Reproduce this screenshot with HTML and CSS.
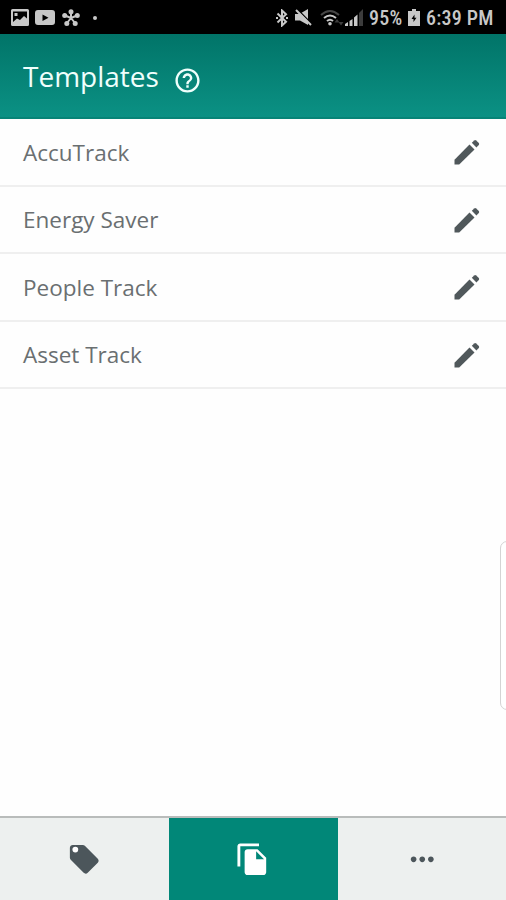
FILE: index.html
```
<!DOCTYPE html>
<html lang="en">
<head>
    <meta charset="UTF-8">
    <meta name="viewport" content="width=device-width, initial-scale=1.0">
    <title>Templates</title>
    <link rel="stylesheet" href="styles.css">
</head>
<body>
    <svg class="sprite" width="0" height="0">
        <symbol id="pencil" viewBox="0 0 26 26">
            <path d="M0.5 20.800 15.500 5.500 20.500 10.500 5.200 25.500H0.500z"/>
            <path d="M17.800 3.800 20.200 1.400Q21.200 .6 22.200 1.400L24.800 4Q25.600 5 24.800 6L22.400 8.400z"/>
        </symbol>
    </svg>

    <div class="app">
        <div class="status-bar">
            <div class="status-left">
                <svg class="s-image" viewBox="0 0 18 17"><path fill-rule="evenodd" d="M1.500 0h15Q18 0 18 1.500v14Q18 17 16.500 17h-15Q0 17 0 15.500v-14Q0 0 1.500 0zM2 2.500V13l4-3.500 3 1.500 4-4 3 2.500v-7zM3.500 4h3v3h-3z"/></svg>
                <svg class="s-video" viewBox="0 0 20 15"><path fill-rule="evenodd" d="M3 0h14q3 0 3 3v9q0 3-3 3H3q-3 0-3-3V3q0-3 3-3zM7.500 4.500v6.500l6-3.250z"/></svg>
                <svg class="s-flower" viewBox="0 0 18 18">
                    <g stroke-width="2" stroke-linecap="round"><path d="M9 9V3M9 9 3 6.500M9 9l6-2.500M9 9l-4 5M9 9l4 5"/></g>
                    <circle cx="9" cy="2.700" r="2.500"/><circle cx="2.700" cy="6.500" r="2.500"/><circle cx="15.300" cy="6.500" r="2.500"/><circle cx="4.800" cy="14.500" r="2.500"/><circle cx="13.200" cy="14.500" r="2.500"/>
                </svg>
                <span class="dot"></span>
            </div>
            <div class="status-right">
                <svg class="s-bluetooth" viewBox="0 0 12 18"><path fill="none" stroke-width="2" d="M1.500 4.500 10 12.800 6 16.500v-15L10 5.200 1.500 13.500M0 9h2M10 9H12"/></svg>
                <svg class="s-mute" viewBox="0 0 17 17"><path d="M0 5h4.500L13 0v16L5 11.500H0z"/><path d="M2.500 0.500 17 15" stroke="#000" stroke-width="1.500"/><path d="M1 1 16 16" stroke="#c8c8c8" stroke-width="2"/></svg>
                <svg class="s-wifi" viewBox="0 0 24 18">
                    <g fill="none" stroke-width="2"><path d="M1 6Q10-2 19 6" opacity=".35"/><path d="M4 9q6-5 12 0M7 12q3-2.500 6 0"/></g>
                    <circle cx="10" cy="14.800" r="1.800"/>
                    <path d="M17 10l2.500 3.500h-5zM21 16.500l-2.500-3.500h5z" opacity=".3"/>
                </svg>
                <svg class="s-signal" viewBox="0 0 18 17"><path d="M0 17v-2l3-2v4zM4.500 17v-5l3-2v7zM9 17V8.500l3.500-3V17z"/><path opacity=".3" d="M14 17V4l4-4v17z"/></svg>
                <span class="battery-level">95%</span>
                <svg class="s-battery" viewBox="0 0 12 17"><path fill-rule="evenodd" d="M4 0h4v2h4v15H0V2h4zM6.500 5.500 3.500 10h2v3L8.500 8.700H6.500z"/></svg>
                <span class="clock">6:39 PM</span>
            </div>
        </div>

        <header>
            <h1>Templates</h1>
            <svg class="help" viewBox="0 0 24 24"><path d="M11 18h2v-2h-2v2zm1-16C6.480 2 2 6.480 2 12s4.480 10 10 10 10-4.480 10-10S17.520 2 12 2zm0 18c-4.410 0-8-3.590-8-8s3.590-8 8-8 8 3.590 8 8-3.590 8-8 8zm0-14c-2.210 0-4 1.790-4 4h2c0-1.100.9-2 2-2s2 .9 2 2c0 2-3 1.750-3 5h2c0-2.250 3-2.500 3-5 0-2.210-1.790-4-4-4z"/></svg>
        </header>

        <main>
            <ul class="template-list">
                <li><span>AccuTrack</span><svg class="edit"><use href="#pencil"/></svg></li>
                <li><span>Energy Saver</span><svg class="edit"><use href="#pencil"/></svg></li>
                <li><span>People Track</span><svg class="edit"><use href="#pencil"/></svg></li>
                <li><span>Asset Track</span><svg class="edit"><use href="#pencil"/></svg></li>
            </ul>
            <div class="edge-handle"></div>
        </main>

        <nav class="tabs">
            <a class="tab">
                <svg viewBox="0 0 24 24"><path d="M21.410 11.580l-9-9C12.050 2.220 11.550 2 11 2H4c-1.100 0-2 .9-2 2v7c0 .55.220 1.050.590 1.420l9 9c.36.360.860.580 1.410.580.550 0 1.050-.220 1.410-.590l7-7c.370-.360.590-.860.590-1.410 0-.550-.230-1.060-.590-1.420z"/><circle class="tag-hole" cx="5.800" cy="5.300" r="2"/></svg>
            </a>
            <a class="tab active">
                <svg viewBox="0 0 24 24"><path d="M16 1H3c-1.100 0-2 .9-2 2v14h2V3h13V1zm-1 4l6 6v10c0 1.100-.9 2-2 2H7.990C6.890 23 6 22.100 6 21l.010-14c0-1.100.890-2 1.990-2h7zm-1 7h5.500L14 6.500V12z"/></svg>
            </a>
            <a class="tab">
                <svg viewBox="0 0 24 24"><path d="M6 10c-1.100 0-2 .9-2 2s.9 2 2 2 2-.9 2-2-.9-2-2-2zm12 0c-1.100 0-2 .9-2 2s.9 2 2 2 2-.9 2-2-.9-2-2-2zm-6 0c-1.100 0-2 .9-2 2s.9 2 2 2 2-.9 2-2-.9-2-2-2z"/></svg>
            </a>
        </nav>
    </div>
</body>
</html>
```
FILE: styles.css
```
* {
    box-sizing: border-box;
}

body {
    margin: 0;
    background-color: #fefefe;
    font-family: "Open Sans", "Noto Sans", sans-serif;
    color: #6a6f71;
}

.sprite {
    position: absolute;
}

.app {
    display: flex;
    flex-direction: column;
    width: 506px;
    height: 900px;
    overflow: hidden;
}

.status-bar {
    display: flex;
    justify-content: space-between;
    align-items: center;
    height: 34px;
    padding: 1px 11px 0;
    background-color: #000;
    color: #c8c8c8;
    font-family: "Roboto Condensed", Roboto, sans-serif;
    font-stretch: condensed;
    font-size: 20px;
    font-weight: 500;
    letter-spacing: 0.2px;
}

.status-bar svg {
    display: block;
    flex: none;
    fill: #c8c8c8;
    stroke: none;
}

.status-left,
.status-right {
    display: flex;
    align-items: center;
    white-space: nowrap;
}

.s-image {
    width: 18px;
    height: 17px;
    margin-right: 6px;
}

.s-video {
    width: 20px;
    height: 15px;
    margin-right: 7px;
}

.s-flower {
    width: 18px;
    height: 18px;
}

.s-flower g,
.s-wifi g,
.s-bluetooth path {
    stroke: #c8c8c8;
}

.dot {
    width: 4px;
    height: 4px;
    margin-left: 13px;
    border-radius: 50%;
    background-color: #c8c8c8;
}

.s-bluetooth {
    width: 12px;
    height: 18px;
    margin-right: 7px;
}

.s-mute {
    width: 17px;
    height: 17px;
    margin-right: 8px;
}

.s-wifi {
    width: 24px;
    height: 18px;
    margin-right: 1px;
}

.s-signal {
    width: 18px;
    height: 17px;
    margin-right: 6px;
}

.battery-level {
    width: 35px;
    margin-right: 4px;
}

.s-battery {
    width: 12px;
    height: 17px;
    margin-right: 6px;
}

.clock {
    width: 69px;
}

header {
    display: flex;
    align-items: center;
    height: 85px;
    padding-left: 23px;
    background: linear-gradient(#017468, #0b9184);
    border-bottom: 2px solid #078477;
    color: #effffc;
}

h1 {
    margin: 0;
    font-size: 28px;
    font-weight: 400;
    line-height: 40px;
}

.help {
    width: 29px;
    height: 29px;
    margin: 9px 0 0 14px;
    fill: #effffc;
}

main {
    flex: 1;
    position: relative;
}

.template-list {
    margin: 0;
    padding: 0;
    list-style: none;
}

.template-list li {
    display: flex;
    align-items: center;
    justify-content: space-between;
    height: 67.5px;
    padding: 1px 26px 0 23px;
    border-bottom: 2px solid #efefef;
    font-size: 22.5px;
    font-weight: 400;
}

.edit {
    width: 26px;
    height: 26px;
    fill: #50585b;
}

/* side panel handle, sits over the right edge */
.edge-handle {
    position: absolute;
    right: -10px;
    top: 422px;
    width: 16px;
    height: 169px;
    border: 1px solid #d4d4d4;
    border-radius: 7px;
    background-color: #fff;
}

.tabs {
    display: grid;
    grid-template-columns: 169px 169px 168px;
    height: 84px;
    border-top: 2px solid #b9bcbb;
    background-color: #edf0ef;
}

.tab {
    display: flex;
    align-items: center;
    justify-content: center;
}

.tab svg {
    width: 34.5px;
    height: 34.5px;
    fill: #4c565b;
}

.tab .tag-hole {
    fill: #fff;
}

.tab.active {
    background-color: #018778;
}

.tab.active svg {
    fill: #fff;
}
```
